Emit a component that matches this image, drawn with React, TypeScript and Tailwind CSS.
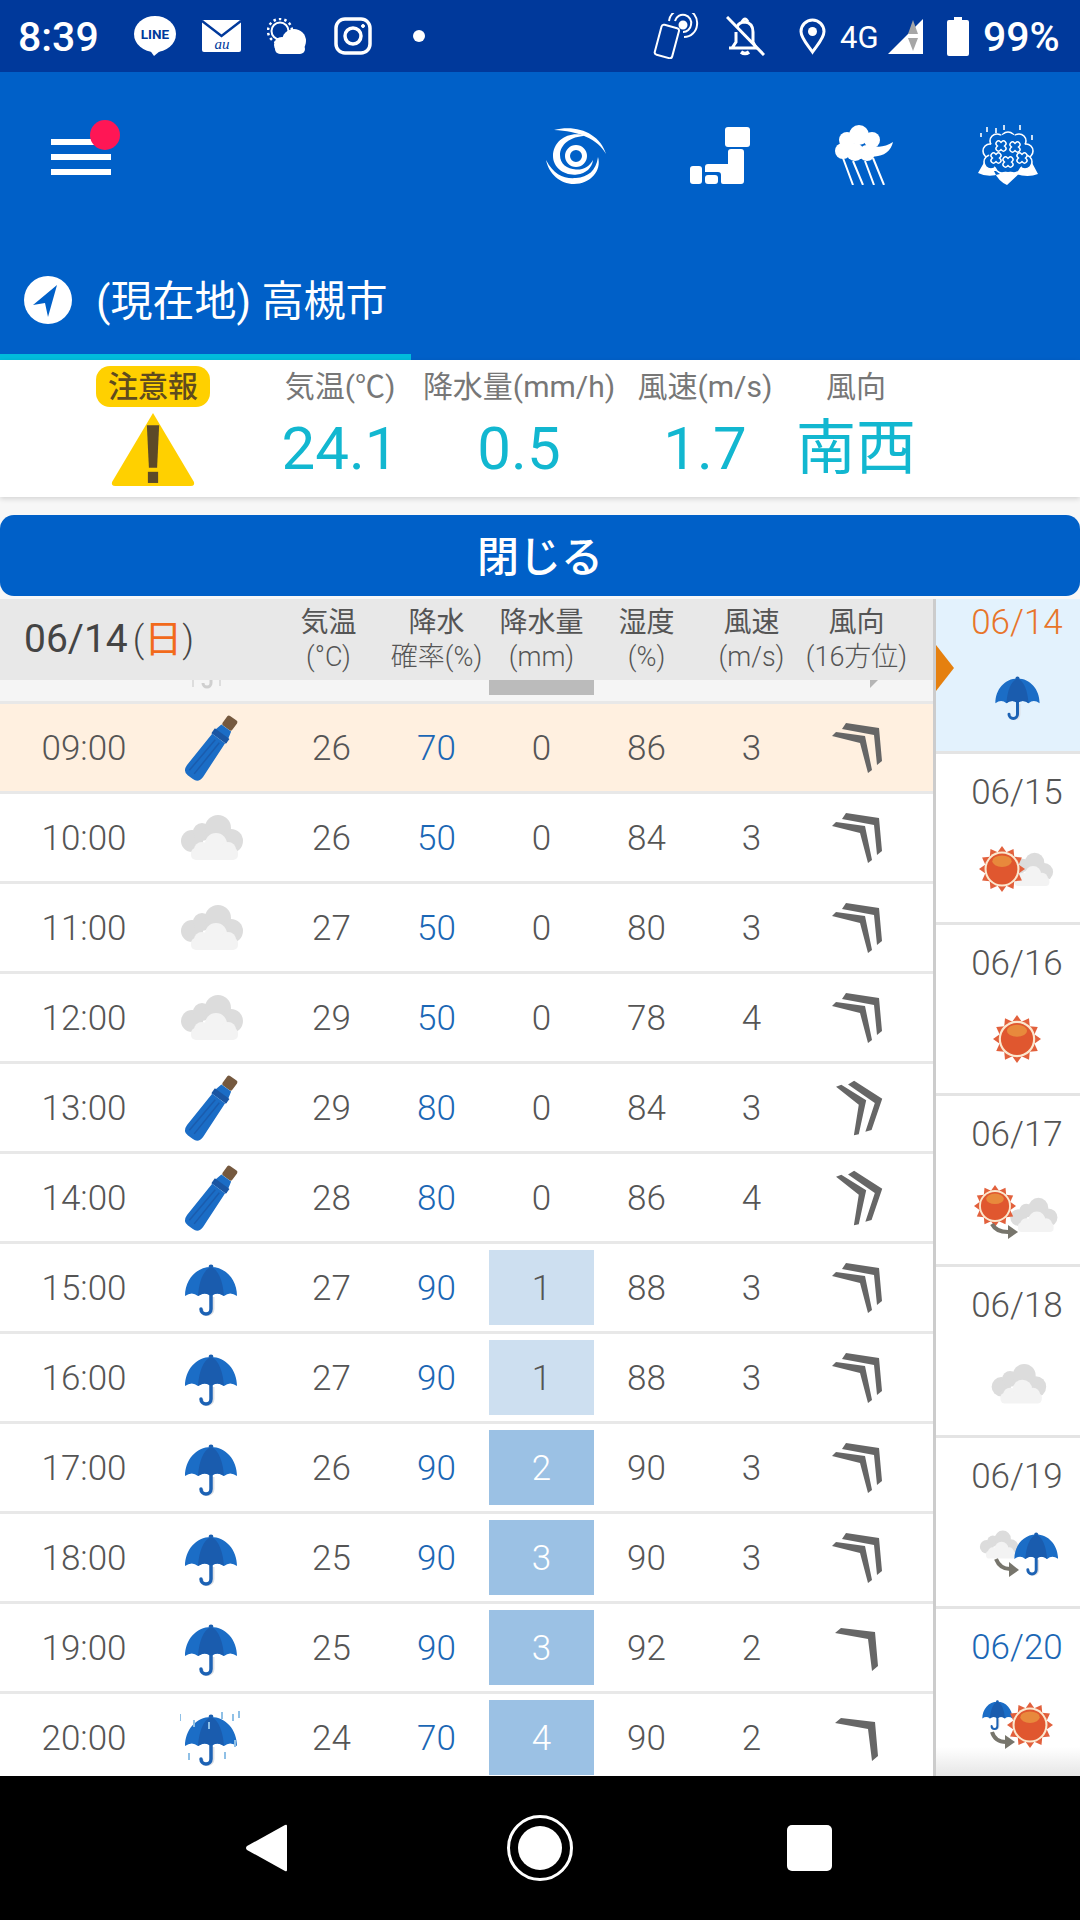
type Wx = "closed" | "cloud" | "umbrella" | "rain";
type Wind = "sw" | "wsw" | "single";

interface HourRow {
  time: string;
  wx: Wx;
  temp: number;
  prob: number;
  rain: number;
  humidity: number;
  speed: number;
  wind: Wind;
}

const HOURS: HourRow[] = [
  { time: "09:00", wx: "closed", temp: 26, prob: 70, rain: 0, humidity: 86, speed: 3, wind: "sw" },
  { time: "10:00", wx: "cloud", temp: 26, prob: 50, rain: 0, humidity: 84, speed: 3, wind: "sw" },
  { time: "11:00", wx: "cloud", temp: 27, prob: 50, rain: 0, humidity: 80, speed: 3, wind: "sw" },
  { time: "12:00", wx: "cloud", temp: 29, prob: 50, rain: 0, humidity: 78, speed: 4, wind: "sw" },
  { time: "13:00", wx: "closed", temp: 29, prob: 80, rain: 0, humidity: 84, speed: 3, wind: "wsw" },
  { time: "14:00", wx: "closed", temp: 28, prob: 80, rain: 0, humidity: 86, speed: 4, wind: "wsw" },
  { time: "15:00", wx: "umbrella", temp: 27, prob: 90, rain: 1, humidity: 88, speed: 3, wind: "sw" },
  { time: "16:00", wx: "umbrella", temp: 27, prob: 90, rain: 1, humidity: 88, speed: 3, wind: "sw" },
  { time: "17:00", wx: "umbrella", temp: 26, prob: 90, rain: 2, humidity: 90, speed: 3, wind: "sw" },
  { time: "18:00", wx: "umbrella", temp: 25, prob: 90, rain: 3, humidity: 90, speed: 3, wind: "sw" },
  { time: "19:00", wx: "umbrella", temp: 25, prob: 90, rain: 3, humidity: 92, speed: 2, wind: "single" },
  { time: "20:00", wx: "rain", temp: 24, prob: 70, rain: 4, humidity: 90, speed: 2, wind: "single" },
];

const NUM = "w-[105px] pt-[4px] text-center text-[35px] font-light";

function UmbrellaG({ x = 0, y = 0, s = 1 }: { x?: number; y?: number; s?: number }) {
  return (
    <g transform={`translate(${x} ${y}) scale(${s})`}>
      <path d="M32 33V45a5.5 5.5 0 0 1-11 0" fill="none" stroke="#dde0e4" strokeWidth="3" />
      <path d="M30 30V45a5 5 0 0 1-10 0" fill="none" stroke="#1c62b4" strokeWidth="3.5" strokeLinecap="round" />
      <circle cx="30" cy="3" r="2.4" fill="#1a5fb0" />
      <path d="M30 3C45 3 56 16 56 32Q49 27 43 32Q36 27 30 32Q24 27 17 32Q11 27 4 32C4 16 15 3 30 3Z" fill="#1b6dc6" />
      <path d="M30 3C38 6 42 18 43 32Q36 27 30 32Q24 27 17 32C18 18 22 6 30 3Z" fill="#1a5cae" />
    </g>
  );
}

function CloudG({ x = 0, y = 0, s = 1 }: { x?: number; y?: number; s?: number }) {
  return (
    <g transform={`translate(${x} ${y}) scale(${s})`}>
      <g fill="#dcdcdc">
        <circle cx="14" cy="27" r="11" />
        <circle cx="24" cy="18" r="9" />
        <circle cx="40" cy="14" r="13" />
        <circle cx="53" cy="27" r="12" />
      </g>
      <g fill="#f3f3f3">
        <circle cx="24" cy="36" r="8" />
        <circle cx="38" cy="30" r="11" />
        <circle cx="50" cy="36" r="8" />
        <rect x="13" y="34" width="47" height="12" rx="5" />
      </g>
    </g>
  );
}

function SunG({ cx, cy, r }: { cx: number; cy: number; r: number }) {
  return (
    <g>
      {Array.from({ length: 12 }, (_, i) => (
        <polygon
          key={i}
          points={`${cx - r * 0.2},${cy - r * 0.72} ${cx},${cy - r} ${cx + r * 0.2},${cy - r * 0.72}`}
          fill="#e2603c"
          transform={`rotate(${i * 30} ${cx} ${cy})`}
        />
      ))}
      <circle cx={cx} cy={cy} r={r * 0.76} fill="#fbe8cf" />
      <circle cx={cx} cy={cy} r={r * 0.67} fill="#e0572f" />
      <ellipse cx={cx} cy={cy - r * 0.34} rx={r * 0.42} ry={r * 0.25} fill="#e8893c" />
    </g>
  );
}

function ArrowG({ d, head }: { d: string; head: string }) {
  return (
    <g>
      <path d={d} fill="none" stroke="#77756c" strokeWidth="4" />
      <polygon points={head} fill="#77756c" />
    </g>
  );
}

function ClosedUmbrella() {
  return (
    <svg className="mt-[3px]" width="70" height="76" viewBox="-35 -38 70 76">
      <g transform="rotate(36)">
        <rect x="-6" y="-38" width="12" height="12" rx="2" fill="#75593f" />
        <path d="M-6 -26H6L9 -14H-9Z" fill="#1b6dc6" />
        <rect x="-9" y="-19" width="18" height="6" fill="#1a56a3" />
        <path d="M-8 -13H8L10 27Q10 35 3 35H-3Q-10 35 -10 27Z" fill="#1b6dc6" />
        <path d="M-2 -10L-5 30M3 -10L1 30" stroke="#1a5cae" strokeWidth="1.5" fill="none" />
      </g>
    </svg>
  );
}

function WxIcon({ wx }: { wx: Wx }) {
  if (wx === "closed") return <ClosedUmbrella />;
  if (wx === "cloud")
    return (
      <svg width="66" height="48" viewBox="0 0 66 48">
        <CloudG />
      </svg>
    );
  return (
    <svg width="62" height="62" viewBox="-1 -7 62 62">
      <UmbrellaG />
      {wx === "rain" && (
        <g stroke="#8fc0e6" strokeWidth="2">
          <path d="M-1 0V7M13 6V13M28 8V15M41 -2V5M52 0V7M58 -3V4M-4 26V33M54 26V33M8 39V46M44 38V45" />
        </g>
      )}
    </svg>
  );
}

function WindIcon({ wind }: { wind: Wind }) {
  let transform: string | undefined;
  if (wind === "wsw") transform = "translate(-3 0) rotate(24 28 28)";
  if (wind === "single") transform = "translate(-2 0)";
  return (
    <svg width="56" height="56" viewBox="0 0 56 56">
      <g fill="#666" transform={transform}>
        {wind === "single" ? (
          <polygon points="14,8 48,12 51,46 45,51 41,19 8,13" />
        ) : (
          <>
            <polygon points="17,3 50,8 53,41 48,45 45,15 13,9" />
            <polygon points="7,12 36,16 43,50 39,53 31,23 3,16" />
          </>
        )}
      </g>
    </svg>
  );
}

function Row({ row, now }: { row: HourRow; now?: boolean }) {
  let box = "";
  if (row.rain >= 2) box = "bg-[#9bc1e4] text-white";
  else if (row.rain === 1) box = "bg-[#cddff0] text-[#555]";
  return (
    <div className={`flex h-[90px] shrink-0 items-center border-b-[3px] border-[#e8e8e8] text-[#555] ${now ? "bg-[#fff0e0]" : "bg-white"}`}>
      <div className="w-[168px] pt-[4px] text-center text-[35px] font-light">{row.time}</div>
      <div className="mr-[25px] flex h-[87px] w-[86px] items-center justify-center">
        <WxIcon wx={row.wx} />
      </div>
      <div className={NUM}>{row.temp}</div>
      <div className={`${NUM} text-[#1b67b5]`}>{row.prob}</div>
      <div className={`flex h-[75px] w-[105px] items-center justify-center pt-[4px] text-[35px] font-light ${box}`}>
        {row.rain}
      </div>
      <div className={NUM}>{row.humidity}</div>
      <div className={NUM}>{row.speed}</div>
      <div className="flex w-[105px] justify-center">
        <WindIcon wind={row.wind} />
      </div>
    </div>
  );
}

// the hour above 09:00, scrolled almost completely under the table header
function ScrolledRow() {
  return (
    <div className="flex h-[24px] shrink-0 items-start border-b-[3px] border-[#e8e8e8] bg-[#f5f5f5]">
      <svg className="ml-[190px] opacity-40" width="40" height="12" viewBox="0 0 40 12">
        <path d="M21 0V3a4 4 0 0 1-8 0" fill="none" stroke="#999" strokeWidth="3" />
        <path d="M3 0V7M30 0V6" stroke="#bbb" strokeWidth="2" />
      </svg>
      <div className="ml-[259px] h-[15px] w-[105px] bg-[#bbbbbb]" />
      <svg className="ml-[276px]" width="8" height="8" viewBox="0 0 8 8">
        <polygon points="0,0 8,0 0,8" fill="#b5b5b5" />
      </svg>
    </div>
  );
}

function HeadCell({ top, sub }: { top: string; sub: string }) {
  return (
    <div className="w-[105px] text-center leading-[34px] text-[#555]">
      <div className="text-[28px]">{top}</div>
      <div className="whitespace-nowrap text-[27px] font-light">{sub}</div>
    </div>
  );
}

function DayItem({ date, blue, children }: { date: string; blue?: boolean; children: React.ReactNode }) {
  return (
    <div className="flex h-[171px] shrink-0 flex-col items-center border-b-[3px] border-[#e4e4e4] bg-white pt-[19px]">
      <div className={`h-[40px] pl-[18px] text-[35px] font-light leading-[40px] ${blue ? "text-[#1b67b5]" : "text-[#555]"}`}>
        {date}
      </div>
      <svg className="mt-[26px]" width="100" height="60" viewBox="0 0 100 60">
        {children}
      </svg>
    </div>
  );
}

function StatusBar() {
  return (
    <div className="flex h-[72px] shrink-0 items-center bg-[#00399b] pl-[18px] text-white">
      <div className="w-[116px] pt-[3px] text-[41px] font-medium">8:39</div>
      <svg width="42" height="40" viewBox="0 0 42 40">
        <ellipse cx="21" cy="18" rx="21" ry="18" fill="#fff" />
        <path d="M15 33L20 40L32 30Z" fill="#fff" />
        <text x="21" y="23" textAnchor="middle" fontSize="13.5" fontWeight="700" fill="#00399b" fontFamily="Roboto">LINE</text>
      </svg>
      <svg className="ml-[26px]" width="39" height="32" viewBox="0 0 39 32">
        <rect width="39" height="32" rx="2" fill="#fff" />
        <path d="M0 1L19.5 16L39 1" fill="none" stroke="#00399b" strokeWidth="2.5" />
        <text x="20" y="29" textAnchor="middle" fontSize="15" fontStyle="italic" fontFamily="Liberation Serif" fill="#00399b">au</text>
      </svg>
      <svg className="ml-[26px]" width="39" height="36" viewBox="0 0 39 36">
        <circle cx="13" cy="13" r="8.5" fill="none" stroke="#fff" strokeWidth="2" />
        <circle cx="13" cy="13" r="12" fill="none" stroke="#fff" strokeWidth="2.5" strokeDasharray="2.5 3" />
        <g fill="#fff">
          <circle cx="27" cy="23" r="12" />
          <circle cx="15" cy="27" r="8" />
          <rect x="8" y="26" width="30" height="10" rx="5" />
        </g>
      </svg>
      <svg className="ml-[28px]" width="38" height="38" viewBox="0 0 38 38" fill="none" stroke="#fff" strokeWidth="3.5">
        <rect x="2" y="2" width="34" height="34" rx="9" />
        <circle cx="19" cy="19" r="8" />
        <circle cx="29" cy="9" r="1.5" fill="#fff" strokeWidth="1" />
      </svg>
      <div className="ml-[41px] h-[12px] w-[12px] rounded-full bg-white" />
      <svg className="ml-[228px]" width="46" height="46" viewBox="0 0 46 46" fill="none" stroke="#fff" strokeWidth="2">
        <rect x="5" y="13" width="18" height="31" rx="2.5" transform="rotate(15 14 28)" />
        <path d="M16 8A13 13 0 0 1 44 12A13 13 0 0 1 31 24" />
        <path d="M22 8A8 8 0 0 1 38 12A8 8 0 0 1 30 19" />
        <circle cx="30" cy="12" r="3.5" fill="#fff" />
      </svg>
      <svg className="ml-[27px]" width="39" height="40" viewBox="0 0 39 40" fill="none" stroke="#fff" strokeWidth="3">
        <path d="M3 32H30L27 26V16Q27 7 19 6Q13 6 11 11M10 16V26L6 32" />
        <path d="M15 36Q19 39 23 36" strokeWidth="3.5" />
        <path d="M16 6Q19 0 22 6" strokeWidth="3" />
        <path d="M1 1L38 39" />
      </svg>
      <svg className="ml-[34px]" width="27" height="37" viewBox="0 0 27 37">
        <path d="M13.5 34C8 26 2 20 2 13.5A11.5 11.5 0 0 1 25 13.5C25 20 19 26 13.5 34Z" fill="none" stroke="#fff" strokeWidth="3" />
        <circle cx="13.5" cy="13.5" r="4.5" fill="#fff" />
      </svg>
      <div className="ml-[14px] w-[39px] pt-[2px] text-[31px] leading-none">4G</div>
      <svg className="ml-[9px]" width="35" height="35" viewBox="0 0 35 35">
        <polygon points="35,0 35,35 0,35" fill="#fff" />
        <polygon points="25,1 30,15 20,15" fill="#a6a6a6" />
        <polygon points="20,19 30,19 25,32" fill="#a6a6a6" />
      </svg>
      <svg className="ml-[24px]" width="22" height="39" viewBox="0 0 22 39">
        <path d="M7 0H15V3H20Q22 3 22 5V37Q22 39 20 39H2Q0 39 0 37V5Q0 3 2 3H7Z" fill="#fff" />
      </svg>
      <div className="ml-[14px] pt-[3px] text-[41px] font-medium">99%</div>
    </div>
  );
}

function AppHeader() {
  return (
    <div className="h-[288px] shrink-0 bg-[#0060c8] text-white">
      <div className="flex h-[166px] items-center pl-[51px]">
        <div className="relative mt-[4px] flex w-[60px] flex-col gap-[9px]">
          <div className="h-[6px] bg-white" />
          <div className="h-[6px] bg-white" />
          <div className="h-[6px] bg-white" />
          <div className="absolute left-[39px] top-[-19px] h-[30px] w-[30px] rounded-full bg-[#ff1655]" />
        </div>
        <svg className="ml-[435px]" width="60" height="57" viewBox="0 0 60 57" fill="#fff">
          <path d="M8 3C30 -3 54 6 60 27C52 12 32 4 8 3Z" />
          <path d="M0 33C8 48 18 52 30 51C42 50 50 44 52 30C56 44 44 57 28 57C14 57 3 47 0 33Z" />
          <path d="M40 9C24 3 7 13 7 29C7 41 19 49 31 47.5C40 46.5 46 41 47 33C43 40 37 43 30 42.5C21 42 14 37 14 28C14 18 24 9 40 9Z" />
          <circle cx="30" cy="29" r="8.5" fill="none" stroke="#fff" strokeWidth="5" />
        </svg>
        <svg className="ml-[84px]" width="60" height="57" viewBox="0 0 60 57" fill="#fff">
          <rect x="35" y="0" width="25" height="20" rx="3" />
          <rect x="0" y="39" width="12" height="18" rx="3" />
          <rect x="15" y="48" width="13" height="9" rx="3" />
          <path d="M41 22H51Q54 22 54 25V54Q54 57 51 57H33Q31 57 31 55V48Q31 45 28 45H15V40Q15 37 18 37H38V25Q38 22 41 22Z" />
        </svg>
        <svg className="ml-[85px]" width="58" height="60" viewBox="0 0 58 60" fill="#fff">
          <circle cx="24" cy="10" r="10" />
          <circle cx="12" cy="15" r="8" />
          <circle cx="37" cy="15" r="8" />
          <circle cx="8" cy="26" r="8" />
          <circle cx="20" cy="27" r="9" />
          <circle cx="32" cy="28" r="8" />
          <path d="M36 18C40 24 50 22 58 17C56 27 46 33 36 31Z" />
          <path d="M8 33L18 60M18 36L28 60M30 36L39 60M38 33L49 60" stroke="#fff" strokeWidth="2" fill="none" />
        </svg>
        <svg className="ml-[85px]" width="60" height="60" viewBox="0 0 60 60">
          <path d="M8 34L0 48Q10 53 22 49ZM52 34L60 49Q50 53 38 49ZM16 46H44L29 60Q20 56 16 46Z" fill="#fff" />
          <g fill="#0060c8" stroke="#fff" strokeWidth="1.6">
            <circle cx="30" cy="14" r="7" />
            <circle cx="19" cy="16" r="7" />
            <circle cx="41" cy="16" r="7" />
            <circle cx="12" cy="26" r="7" />
            <circle cx="48" cy="26" r="7" />
            <circle cx="13" cy="37" r="7" />
            <circle cx="47" cy="37" r="7" />
            <circle cx="24" cy="41" r="7" />
            <circle cx="36" cy="41" r="7" />
          </g>
          <circle cx="30" cy="28" r="19" fill="#0060c8" />
          {[
            [23, 21],
            [37, 22],
            [18, 33],
            [30, 37],
            [44, 33],
          ].map(([x, y]) => (
            <g key={`${x}-${y}`} transform={`translate(${x} ${y}) rotate(45)`} strokeLinecap="round">
              <path d="M-3.5 0H3.5M0 -3.5V3.5" stroke="#fff" strokeWidth="6.5" />
              <path d="M-3.5 0H3.5M0 -3.5V3.5" stroke="#0060c8" strokeWidth="3.6" />
            </g>
          ))}
          <path d="M9 2V7M18 3V8M26 0V5M42 0V5M54 10V15M3 8V12" stroke="#fff" strokeWidth="1.6" />
        </svg>
      </div>
      <div className="flex h-[122px] w-[411px] items-center gap-[24px] border-b-[6px] border-[#00bcdc] pl-[24px] pt-[8px]">
        <svg width="48" height="48" viewBox="0 0 48 48">
          <circle cx="24" cy="24" r="24" fill="#fff" />
          <polygon points="33,9 9,29 21,27 24,41" fill="#0060c8" />
        </svg>
        <span className="whitespace-nowrap pt-[3px] text-[42px]">(現在地) 高槻市</span>
      </div>
    </div>
  );
}

function InfoPanel() {
  const cols = [
    { label: "気温(℃)", value: "24.1", width: "ml-[60px] w-[140px]" },
    { label: "降水量(mm/h)", value: "0.5", width: "w-[218px]" },
    { label: "風速(m/s)", value: "1.7", width: "w-[154px]" },
    { label: "風向", value: "南西", width: "w-[148px]" },
  ];
  return (
    <div className="relative flex h-[137px] shrink-0 bg-white shadow-[0_2px_5px_rgba(0,0,0,0.14)]">
      <div className="ml-[96px] flex w-[114px] flex-col items-center pt-[6px]">
        <div className="flex h-[41px] w-[114px] items-center justify-center rounded-[14px] bg-[#ffd000] text-[30px] font-medium text-[#5f4b1e]">
          注意報
        </div>
        <svg className="mt-[4px]" width="86" height="75" viewBox="0 0 84 74" preserveAspectRatio="none">
          <path d="M42 2L82 70Q83 74 79 74H5Q1 74 2 70Z" fill="#ffd000" />
          <path d="M36 14H48L46 56H38Z" fill="#5c4a28" />
          <rect x="37" y="60" width="10" height="11" fill="#5c4a28" />
        </svg>
      </div>
      {cols.map((c) => (
        <div key={c.label} className={`flex flex-col items-center pt-[9px] ${c.width}`}>
          <div className="h-[36px] whitespace-nowrap text-[30px] leading-[36px] text-[#777]">{c.label}</div>
          <div className="mt-[9px] text-[60px] leading-[70px] text-[#12b7d0]">{c.value}</div>
        </div>
      ))}
    </div>
  );
}

export default function App() {
  return (
    <div className="flex h-[1920px] w-[1080px] flex-col overflow-hidden bg-[#f7f7f7] font-['Roboto','Noto_Sans_CJK_JP',sans-serif]">
      <StatusBar />
      <AppHeader />
      <InfoPanel />

      <div className="mt-[18px] flex h-[81px] shrink-0 items-center justify-center rounded-[14px] bg-[#0060c8] pt-[3px] text-[42px] font-medium text-white">
        閉じる
      </div>

      <div className="relative mt-[3px] flex min-h-0 flex-1">
        <div className="flex w-[933px] flex-col">
          <div className="flex h-[81px] shrink-0 items-center bg-[#e8e8e8]">
            <div className="flex w-[276px] items-center pl-[24px] text-[#444]">
              <span className="text-[39px]">06/14</span>
              <span className="ml-[5px] text-[36px] font-light">(</span>
              <span className="text-[38px] text-[#f26a1b]">日</span>
              <span className="text-[36px] font-light">)</span>
            </div>
            <HeadCell top="気温" sub="(°C)" />
            <div className="ml-[3px]">
              <HeadCell top="降水" sub="確率(%)" />
            </div>
            <HeadCell top="降水量" sub="(mm)" />
            <HeadCell top="湿度" sub="(%)" />
            <HeadCell top="風速" sub="(m/s)" />
            <HeadCell top="風向" sub="(16方位)" />
          </div>
          <div className="flex min-h-0 flex-1 flex-col overflow-hidden">
            <ScrolledRow />
            {HOURS.map((row, i) => (
              <Row key={row.time} row={row} now={i === 0} />
            ))}
          </div>
        </div>

        <div className="flex w-[147px] flex-col overflow-hidden border-l-[3px] border-[#cccccc]">
          <div className="flex h-[155px] shrink-0 flex-col items-center border-b-[3px] border-[#e4e4e4] bg-[#e3f2fd] pt-[4px]">
            <div className="h-[40px] pl-[18px] text-[35px] font-light leading-[40px] text-[#e8752a]">06/14</div>
            <svg className="ml-[18px] mt-[33px]" width="51" height="51" viewBox="0 0 60 60">
              <UmbrellaG />
            </svg>
          </div>
          <DayItem date="06/15">
            <CloudG x={47} y={13} s={0.74} />
            <SunG cx={44} cy={30} r={23} />
          </DayItem>
          <DayItem date="06/16">
            <SunG cx={59} cy={29} r={24} />
          </DayItem>
          <DayItem date="06/17">
            <CloudG x={50} y={16} s={0.76} />
            <SunG cx={37} cy={25} r={21} />
            <ArrowG d="M34 43Q38 51 50 51" head="50,44 60,51 50,58" />
          </DayItem>
          <DayItem date="06/18">
            <CloudG x={31} y={11} s={0.88} />
          </DayItem>
          <DayItem date="06/19">
            <CloudG x={20} y={7} s={0.62} />
            <UmbrellaG x={53} y={9} s={0.84} />
            <ArrowG d="M38 36Q42 46 52 46" head="51,39 61,47 51,54" />
          </DayItem>
          <DayItem date="06/20" blue>
            <UmbrellaG x={22} y={6} s={0.58} />
            <SunG cx={72} cy={31} r={23} />
            <ArrowG d="M34 38Q37 48 48 48" head="47,41 57,48 47,55" />
          </DayItem>
        </div>

        <div className="absolute left-[936px] top-[46px] h-0 w-0 border-y-[23px] border-l-[18px] border-y-transparent border-l-[#e5800f]" />
        <div className="absolute bottom-0 left-[936px] h-[29px] w-[144px] bg-gradient-to-b from-transparent to-[#e6e6e6]" />
      </div>

      <div className="flex h-[144px] shrink-0 items-center bg-black">
        <svg className="ml-[246px]" width="41" height="48" viewBox="0 0 41 48">
          <path d="M41 2V46Q41 48 39 47L1 26Q-1 24 1 22L39 1Q41 0 41 2Z" fill="#fff" />
        </svg>
        <div className="ml-[220px] flex h-[66px] w-[66px] items-center justify-center rounded-full border-[3px] border-white">
          <div className="h-[44px] w-[44px] rounded-full bg-white" />
        </div>
        <div className="ml-[214px] h-[46px] w-[45px] rounded-[5px] bg-white" />
      </div>
    </div>
  );
}
